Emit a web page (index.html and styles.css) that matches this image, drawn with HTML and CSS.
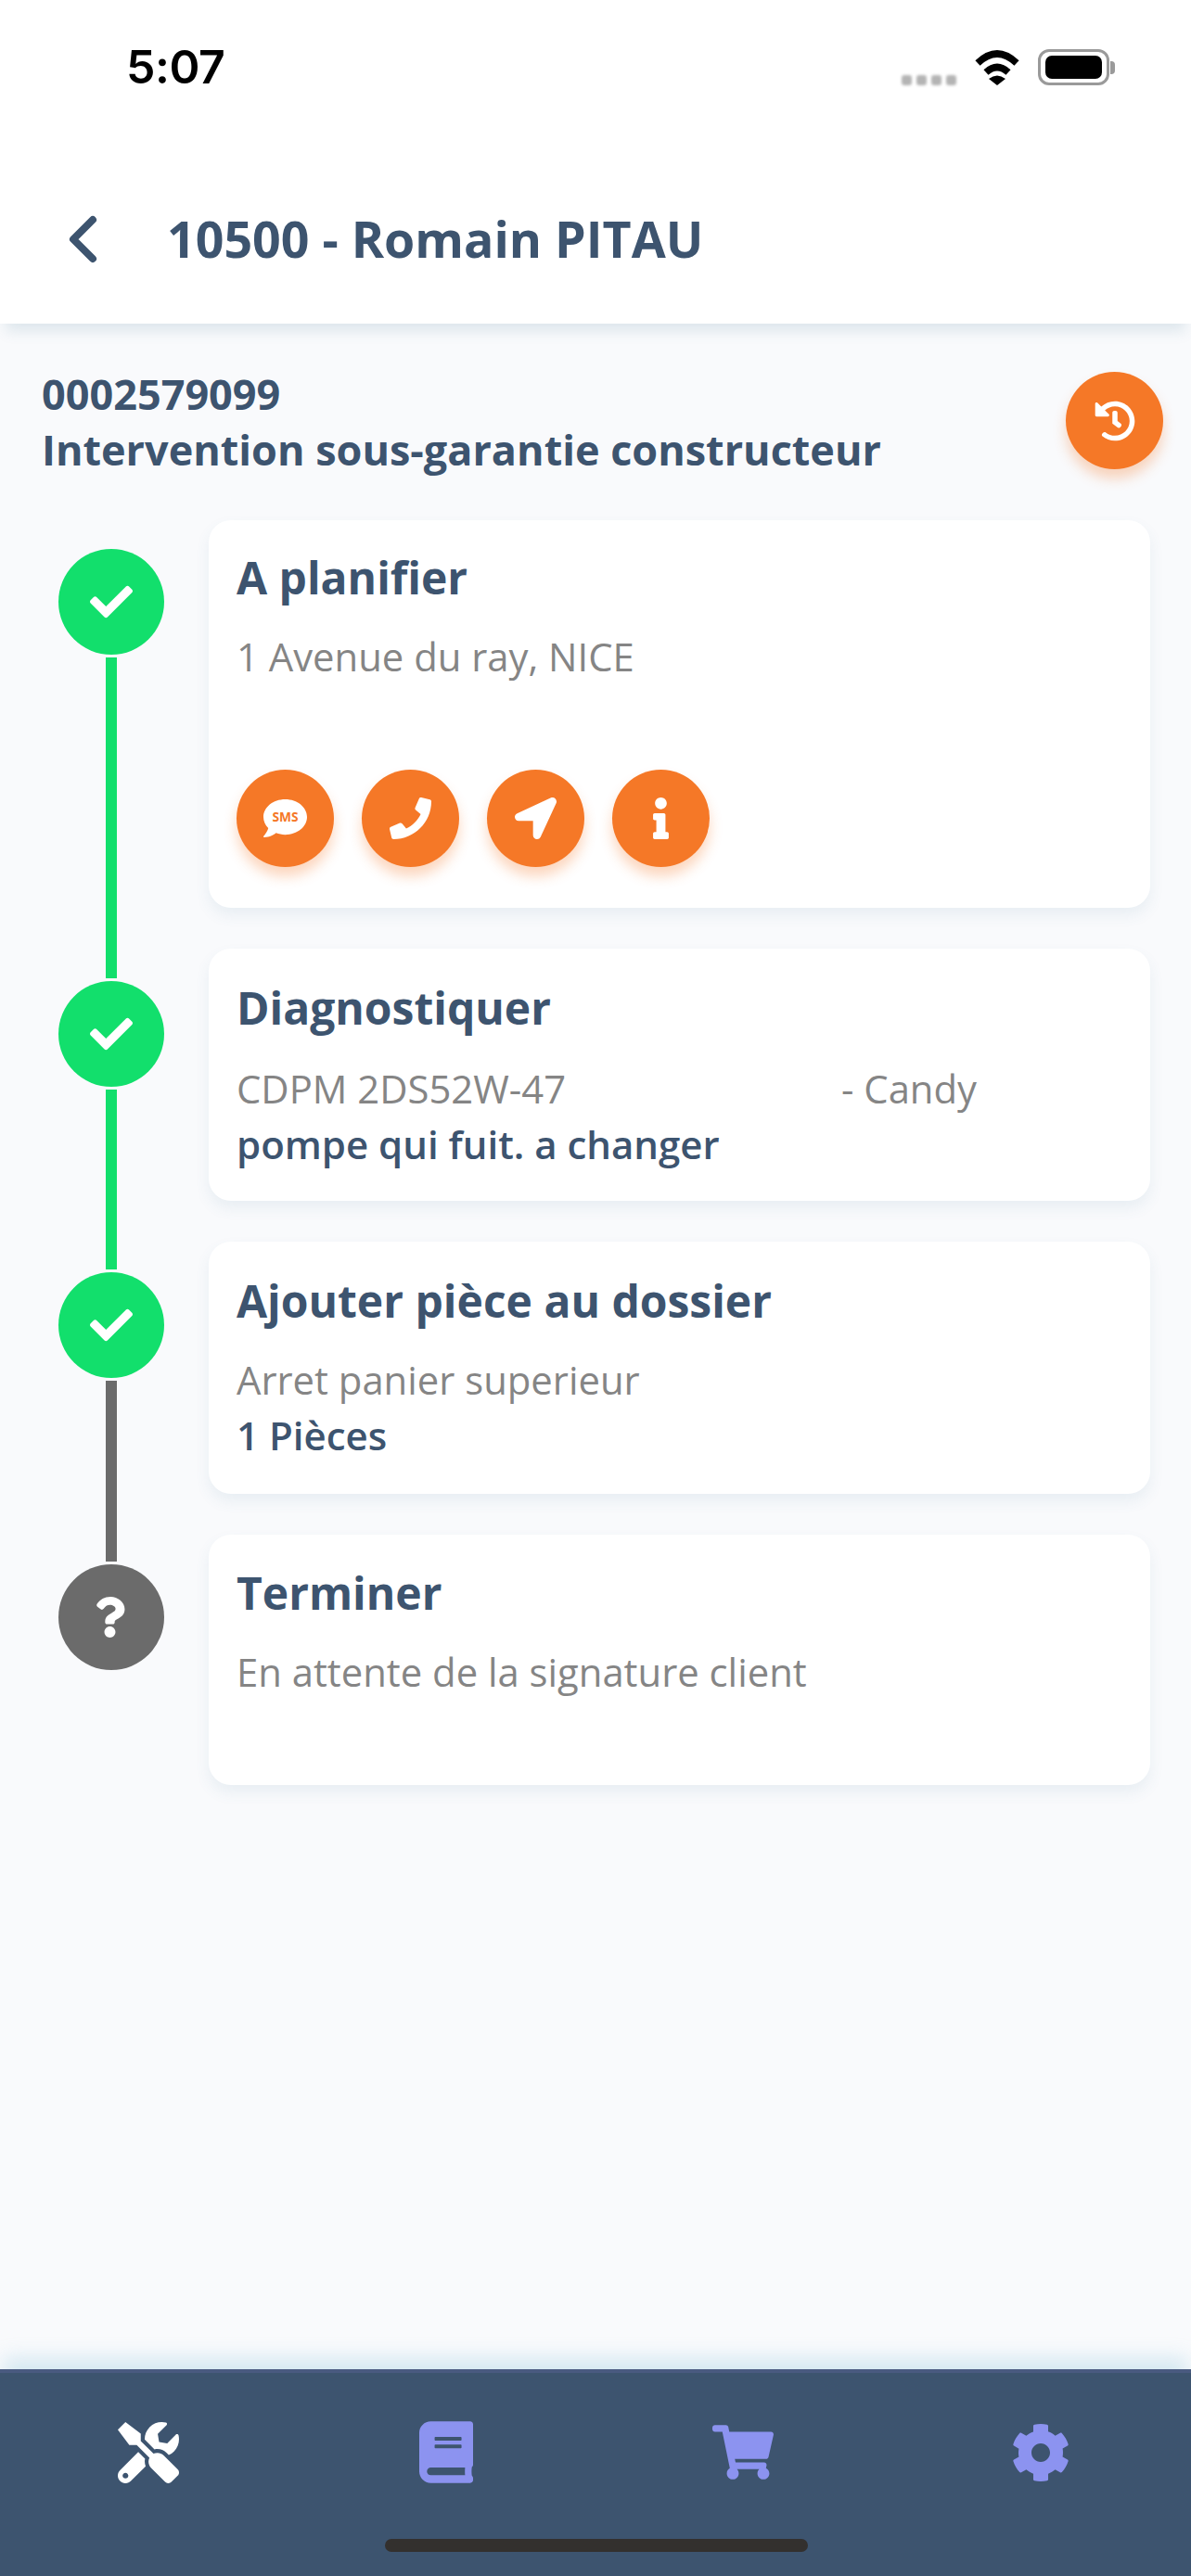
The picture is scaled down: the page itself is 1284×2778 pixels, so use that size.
FILE: index.html
```html
<!DOCTYPE html>
<html lang="fr">
<head>
<meta charset="utf-8">
<title>10500 - Romain PITAU</title>
<link rel="stylesheet" href="styles.css">
</head>
<body>
<div class="app">
  <header class="header">
    <div class="status">
      <span class="time">5:07</span>
      <div class="status-icons">
        <div class="signal"><i></i><i></i><i></i><i></i></div>
        <svg class="wifi" viewBox="0 0 50 39"><path class="wifi-arc" d="M4 15Q25-5 46 15"/><path class="wifi-arc" d="M13 25Q25 14 37 25"/><path d="M16 32Q25 25 34 32L25 39Z"/></svg>
        <div class="battery"><div class="battery-fill"></div></div>
        <div class="battery-cap"></div>
      </div>
    </div>
    <nav class="nav">
      <svg class="back" viewBox="0 0 34 52"><path d="M28 5L7 26L28 47"/></svg>
      <h1 class="nav-title">10500 - Romain PITAU</h1>
    </nav>
  </header>

  <main class="main">
    <section class="info">
      <div class="info-text">
        <div>0002579099</div>
        <div>Intervention sous-garantie constructeur</div>
      </div>
      <button class="fab fab-history"><svg class="ic-history" viewBox="0 0 512 512"><path d="M504 255.531c.253 136.64-111.18 248.372-247.82 248.468-59.015.042-113.223-20.53-155.822-54.911-11.077-8.94-11.905-25.541-1.839-35.607l11.267-11.267c8.609-8.609 22.353-9.551 31.891-1.984C173.062 425.135 212.781 440 256 440c101.705 0 184-82.311 184-184 0-101.705-82.311-184-184-184-48.814 0-93.149 18.969-126.068 49.932l50.754 50.754c10.08 10.08 2.941 27.314-11.313 27.314H24c-8.837 0-16-7.163-16-16V38.627c0-14.254 17.234-21.393 27.314-11.314l49.372 49.372C129.209 34.136 189.552 8 256 8c136.81 0 247.747 110.78 248 247.531zm-180.912 78.784l9.823-12.63c8.138-10.463 6.253-25.542-4.21-33.679L288 256.349V152c0-13.255-10.745-24-24-24h-16c-13.255 0-24 10.745-24 24v135.651l65.409 50.874c10.463 8.137 25.541 6.253 33.679-4.21z"/></svg></button>
    </section>

    <section class="timeline">
      <div class="rail">
        <div class="dot dot-done"><svg class="ic-check" viewBox="0 0 512 512"><path d="M173.898 439.404l-166.4-166.4c-9.997-9.997-9.997-26.206 0-36.204l36.203-36.204c9.997-9.998 26.207-9.998 36.204 0L192 312.69 432.095 72.596c9.997-9.997 26.207-9.997 36.204 0l36.203 36.204c9.997 9.997 9.997 26.206 0 36.204l-294.4 294.401c-9.998 9.997-26.207 9.997-36.204-.001z"/></svg></div>
        <div class="line line-done line-1"></div>
        <div class="dot dot-done"><svg class="ic-check" viewBox="0 0 512 512"><path d="M173.898 439.404l-166.4-166.4c-9.997-9.997-9.997-26.206 0-36.204l36.203-36.204c9.997-9.998 26.207-9.998 36.204 0L192 312.69 432.095 72.596c9.997-9.997 26.207-9.997 36.204 0l36.203 36.204c9.997 9.997 9.997 26.206 0 36.204l-294.4 294.401c-9.998 9.997-26.207 9.997-36.204-.001z"/></svg></div>
        <div class="line line-done line-2"></div>
        <div class="dot dot-done"><svg class="ic-check" viewBox="0 0 512 512"><path d="M173.898 439.404l-166.4-166.4c-9.997-9.997-9.997-26.206 0-36.204l36.203-36.204c9.997-9.998 26.207-9.998 36.204 0L192 312.69 432.095 72.596c9.997-9.997 26.207-9.997 36.204 0l36.203 36.204c9.997 9.997 9.997 26.206 0 36.204l-294.4 294.401c-9.998 9.997-26.207 9.997-36.204-.001z"/></svg></div>
        <div class="line line-todo line-3"></div>
        <div class="dot dot-todo"><svg class="ic-question" viewBox="0 0 384 512"><path d="M202.021 0C122.202 0 70.503 32.703 29.914 91.026c-7.363 10.58-5.093 25.086 5.178 32.874l43.138 32.709c10.373 7.865 25.132 6.026 33.253-4.148 25.049-31.381 43.63-49.449 82.757-49.449 30.764 0 68.816 19.799 68.816 49.631 0 22.552-18.617 34.134-48.993 51.164-35.423 19.86-82.299 44.576-82.299 106.405V320c0 13.255 10.745 24 24 24h72.471c13.255 0 24-10.745 24-24v-5.773c0-42.86 125.268-44.645 125.268-160.627C377.504 66.256 286.902 0 202.021 0zM192 373.459c-38.196 0-69.271 31.075-69.271 69.271 0 38.195 31.075 69.27 69.271 69.27s69.271-31.075 69.271-69.271-31.075-69.27-69.271-69.27z"/></svg></div>
      </div>

      <div class="cards">
        <article class="card card-actions">
          <h2 class="card-title">A planifier</h2>
          <p class="card-sub">1 Avenue du ray, NICE</p>
          <p class="card-strong">&nbsp;</p>
          <div class="actions">
            <button class="fab"><svg class="ic-sms" viewBox="0 0 512 512"><path d="M256 32C114.6 32 0 125.1 0 240c0 49.6 21.4 95 57 130.7C44.5 421.1 2.7 466 2.2 466.5c-2.2 2.3-2.8 5.7-1.5 8.7 1.3 3 4.1 4.8 7.3 4.8 66.3 0 116-31.8 140.6-51.4 32.7 12.3 69 19.4 107.4 19.4 141.4 0 256-93.1 256-208S397.4 32 256 32z"/><text class="sms-label" x="256" y="295">SMS</text></svg></button>
            <button class="fab"><svg class="ic-action" viewBox="0 0 512 512"><path d="M493.4 24.6l-104-24c-11.3-2.6-22.9 3.3-27.5 13.9l-48 112c-4.2 9.8-1.4 21.3 6.9 28l60.6 49.6c-36 76.7-98.9 140.5-177.2 177.2l-49.6-60.6c-6.8-8.3-18.2-11.1-28-6.9l-112 48C3.9 366.5-2 378.1.6 389.4l24 104C27.1 504.2 36.7 512 48 512c256.1 0 464-207.5 464-464 0-11.2-7.7-20.9-18.6-23.4z"/></svg></button>
            <button class="fab"><svg class="ic-action" viewBox="0 0 512 512"><path d="M444.52 3.52L28.74 195.42c-47.97 22.39-31.98 92.75 19.19 92.75h175.91v175.91c0 51.17 70.36 67.17 92.75 19.19l191.9-415.78c15.99-38.39-25.59-79.97-63.97-63.97z"/></svg></button>
            <button class="fab"><svg class="ic-info" viewBox="0 0 192 512"><path d="M20 424.229h20V279.771H20c-11.046 0-20-8.954-20-20V212c0-11.046 8.954-20 20-20h112c11.046 0 20 8.954 20 20v212.229h20c11.046 0 20 8.954 20 20V492c0 11.046-8.954 20-20 20H20c-11.046 0-20-8.954-20-20v-47.771c0-11.046 8.954-20 20-20zM96 0C56.235 0 24 32.235 24 72s32.235 72 72 72 72-32.235 72-72S135.764 0 96 0z"/></svg></button>
          </div>
        </article>

        <article class="card">
          <h2 class="card-title">Diagnostiquer</h2>
          <p class="card-sub card-split"><span class="model">CDPM 2DS52W-47</span><span>- Candy</span></p>
          <p class="card-strong">pompe qui fuit. a changer</p>
        </article>

        <article class="card card-parts">
          <h2 class="card-title">Ajouter pièce au dossier</h2>
          <p class="card-sub">Arret panier superieur</p>
          <p class="card-strong">1 Pièces</p>
        </article>

        <article class="card card-last">
          <h2 class="card-title">Terminer</h2>
          <p class="card-sub">En attente de la signature client</p>
          <p class="card-strong">&nbsp;</p>
        </article>
      </div>
    </section>
  </main>

  <footer class="tabbar">
    <div class="tabs">
      <div class="tab"><svg class="tab-tools" viewBox="0 0 512 512"><path d="M501.1 395.7L384 278.6c-23.1-23.1-57.6-27.6-85.4-13.9L192 158.1V96L64 0 0 64l96 128h62.1l106.6 106.6c-13.6 27.8-9.2 62.3 13.9 85.4l117.1 117.1c14.6 14.6 38.2 14.6 52.7 0l52.7-52.7c14.5-14.6 14.5-38.2 0-52.7zM331.7 225c28.3 0 54.9 11 74.9 31l19.4 19.4c15.8-6.9 30.8-16.5 43.8-29.5 37.1-37.1 49.7-89.3 37.9-136.7-2.2-9-13.5-12.1-20.1-5.5l-74.4 74.4-67.9-11.3L334 98.9l74.4-74.4c6.6-6.6 3.4-17.9-5.7-20.2-47.4-11.7-99.6.9-136.6 37.9-28.5 28.5-41.9 66.1-41.2 103.6l82.1 82.1c8.1-1.9 16.5-2.9 24.7-2.9zm-103.9 82l-56.7-56.7L18.7 402.8c-25 25-25 65.5 0 90.5s65.5 25 90.5 0l123.6-123.6c-7.6-19.9-9.9-41.6-5-62.7zM64 472c-13.2 0-24-10.8-24-24 0-13.3 10.7-24 24-24s24 10.7 24 24c0 13.2-10.7 24-24 24z"/></svg></div>
      <div class="tab"><svg class="tab-book" viewBox="0 0 448 512"><path d="M448 360V24c0-13.3-10.7-24-24-24H96C43 0 0 43 0 96v320c0 53 43 96 96 96h328c13.3 0 24-10.7 24-24v-16c0-7.5-3.5-14.3-8.9-18.7-4.2-15.4-4.2-59.3 0-74.7 5.4-4.3 8.9-11.1 8.9-18.6zM128 134c0-3.3 2.7-6 6-6h212c3.3 0 6 2.7 6 6v20c0 3.3-2.7 6-6 6H134c-3.3 0-6-2.7-6-6v-20zm0 64c0-3.3 2.7-6 6-6h212c3.3 0 6 2.7 6 6v20c0 3.3-2.7 6-6 6H134c-3.3 0-6-2.7-6-6v-20zm253.4 250H96c-17.7 0-32-14.3-32-32 0-17.6 14.4-32 32-32h285.4c-1.9 17.1-1.9 46.9 0 64z"/></svg></div>
      <div class="tab"><svg class="tab-cart" viewBox="0 0 576 512"><path d="M528.12 301.319l47.273-208C578.806 78.301 567.391 64 551.99 64H159.208l-9.166-44.81C147.758 8.021 137.93 0 126.529 0H24C10.745 0 0 10.745 0 24v16c0 13.255 10.745 24 24 24h69.883l70.248 343.435C147.325 417.1 136 435.222 136 456c0 30.928 25.072 56 56 56s56-25.072 56-56c0-15.674-6.447-29.835-16.824-40h209.647C430.447 426.165 424 440.326 424 456c0 30.928 25.072 56 56 56s56-25.072 56-56c0-22.172-12.888-41.332-31.579-50.405l5.517-24.276c3.413-15.018-8.002-29.319-23.403-29.319H218.117l-6.545-32h293.145c11.206 0 20.92-7.754 23.403-18.681z"/></svg></div>
      <div class="tab"><svg class="tab-gear" viewBox="0 0 512 512"><path d="M487.4 315.7l-42.6-24.6c4.3-23.2 4.3-47 0-70.2l42.6-24.6c4.9-2.8 7.1-8.6 5.5-14-11.1-35.6-30-67.8-54.7-94.6-3.8-4.1-10-5.1-14.8-2.3L380.8 110c-17.9-15.4-38.5-27.3-60.8-35.1V25.8c0-5.6-3.9-10.5-9.4-11.7-36.7-8.2-74.3-7.8-109.2 0-5.5 1.2-9.4 6.1-9.4 11.7V75c-22.2 7.9-42.8 19.8-60.8 35.1L88.7 85.5c-4.9-2.8-11-1.9-14.8 2.3-24.7 26.7-43.6 58.9-54.7 94.6-1.7 5.4.6 11.2 5.5 14L67.3 221c-4.3 23.2-4.3 47 0 70.2l-42.6 24.6c-4.9 2.8-7.1 8.6-5.5 14 11.1 35.6 30 67.8 54.7 94.6 3.8 4.1 10 5.1 14.8 2.3l42.6-24.6c17.9 15.4 38.5 27.3 60.8 35.1v49.2c0 5.6 3.9 10.5 9.4 11.7 36.7 8.2 74.3 7.8 109.2 0 5.5-1.2 9.4-6.1 9.4-11.7v-49.2c22.2-7.9 42.8-19.8 60.8-35.1l42.6 24.6c4.9 2.8 11 1.9 14.8-2.3 24.7-26.7 43.6-58.9 54.7-94.6 1.5-5.5-.7-11.3-5.6-14.1zM256 336c-44.1 0-80-35.9-80-80s35.9-80 80-80 80 35.9 80 80-35.9 80-80 80z"/></svg></div>
    </div>
    <div class="home-indicator"></div>
  </footer>
</div>
</body>
</html>
```

FILE: styles.css
```css
* { box-sizing: border-box; }
html, body { margin: 0; padding: 0; }
body { font-family: "Open Sans", "Noto Sans", sans-serif; color: #3d546f; }
svg { display: block; fill: currentColor; }
h1, h2, p { margin: 0; font-size: inherit; font-weight: inherit; }

.app { width: 1284px; height: 2778px; display: flex; flex-direction: column; background: #f9fafc; overflow: hidden; }

.header { position: relative; z-index: 2; height: 349px; background: #fff; box-shadow: 0 14px 14px -6px rgba(70, 120, 150, 0.15); }
.status { height: 144px; padding: 0 82px 0 136px; display: flex; align-items: center; justify-content: space-between; color: #000; }
.time { font-family: Inter, "Liberation Sans", sans-serif; font-size: 50px; font-weight: 600; letter-spacing: -0.5px; }
.status-icons { display: flex; align-items: flex-end; height: 39px; }
.signal { display: flex; gap: 5px; margin-right: 18px; }
.signal i { display: block; width: 11px; height: 11px; border-radius: 3px; background: #b4b4b4; filter: blur(1.5px); }
.wifi { width: 52px; height: 39px; margin-right: 18px; }
.wifi-arc { fill: none; stroke: #000; stroke-width: 7.5; }
.battery { width: 77px; height: 39px; padding: 4px 5px; border: 3px solid #9a9a9a; border-radius: 12px; }
.battery-fill { height: 100%; background: #000; border-radius: 7px; }
.battery-cap { width: 5px; height: 14px; margin: 0 0 12px 1px; background: #9a9a9a; border-radius: 0 4px 4px 0; }

.nav { margin-top: 24px; height: 179px; padding-left: 72px; display: flex; align-items: center; gap: 74px; }
.back { width: 34px; height: 52px; }
.back path { fill: none; stroke: #3d546f; stroke-width: 8; stroke-linecap: round; stroke-linejoin: round; }
.nav-title { font-size: 53.7px; font-weight: 700; line-height: 70px; }

.main { flex: 1; min-height: 0; }
.info { padding: 46px 30px 46px 45px; display: flex; align-items: flex-start; justify-content: space-between; font-size: 45px; font-weight: 700; line-height: 60px; }

.fab { width: 105px; height: 105px; padding: 0; border: 0; border-radius: 50%; background: #f57827; color: #fff; display: flex; align-items: center; justify-content: center; box-shadow: 0 10px 14px rgba(245, 120, 39, 0.3); }
.fab-history { margin-top: 6px; }
.ic-history { width: 44px; height: 44px; }
.ic-action { width: 45px; height: 45px; }
.ic-info { width: 17px; height: 45px; }
.ic-sms { width: 47px; height: 47px; }
.sms-label { font-family: "Open Sans", sans-serif; font-size: 150px; font-weight: 700; fill: #f57827; text-anchor: middle; }

.timeline { display: flex; padding: 0 44px 0 63px; gap: 48px; }
.rail { width: 114px; padding-top: 31px; display: flex; flex-direction: column; align-items: center; flex: none; }
.dot { width: 114px; height: 114px; border-radius: 50%; flex: none; display: flex; align-items: center; justify-content: center; color: #fff; }
.dot-done { background: #12df6c; }
.dot-todo { background: #6b6b6b; }
.ic-check { width: 46px; height: 46px; }
.ic-question { width: 33px; height: 44px; margin-right: 3px; }
.line { width: 12px; margin: 3px 0; flex: none; }
.line-done { background: #12df6c; }
.line-todo { background: #6b6b6b; }
.line-1 { height: 346px; }
.line-2 { height: 194px; }
.line-3 { height: 195px; }

.cards { flex: 1; display: flex; flex-direction: column; gap: 44px; }
.card { background: #fff; border-radius: 24px; padding: 34px 30px 31px; box-shadow: 0 8px 16px rgba(70, 120, 150, 0.09); }
.card-actions { padding-top: 32px; padding-bottom: 44px; }
.card-parts .card-title { margin-bottom: 25px; }
.card-parts { padding-bottom: 33px; }
.card-last { padding-top: 33px; padding-bottom: 32px; }
.card-title { font-size: 48px; font-weight: 700; line-height: 60px; margin-bottom: 27px; }
.card-actions .card-title { margin-bottom: 25px; }
.card-last .card-title { margin-bottom: 25px; }
.card-sub { font-size: 41.8px; line-height: 60px; color: #858585; }
.card-strong { font-size: 42px; font-weight: 600; line-height: 60px; }
.card-split { display: flex; }
.model { width: 652px; }
.actions { display: flex; gap: 30px; margin-top: 32px; }

.tabbar { position: relative; z-index: 2; height: 223px; background: #3d546f; border-top: 4px solid #4a5a80; box-shadow: 0 -16px 20px -4px rgba(120, 185, 215, 0.28); }
.tabs { display: grid; grid-template-columns: repeat(4, 1fr); height: 179px; padding: 51px 2px 0 0; align-items: start; }
.tab { height: 69px; display: flex; align-items: center; justify-content: center; color: #8c93f0; }
.tab:first-child { color: #fff; }
.tab-tools { width: 66px; height: 66px; }
.tab-book { width: 58px; height: 67px; }
.tab-cart { width: 66px; height: 59px; }
.tab-gear { width: 64px; height: 64px; }
.home-indicator { width: 456px; height: 14px; margin-left: 415px; border-radius: 7px; background: #33302e; }
```
